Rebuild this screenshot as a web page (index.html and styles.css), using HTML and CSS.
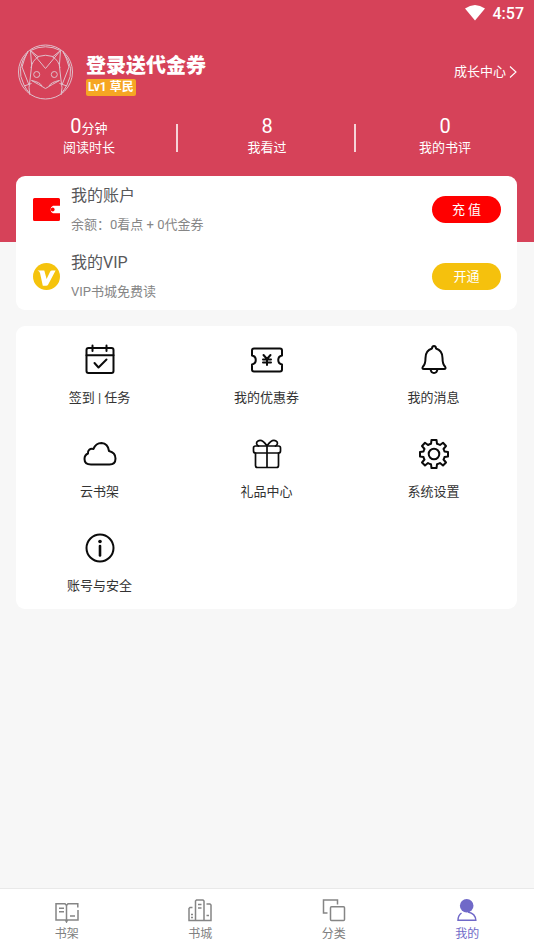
FILE: index.html
```html
<!DOCTYPE html>
<html lang="zh-CN">
<head>
<meta charset="utf-8">
<meta name="viewport" content="width=device-width, initial-scale=1">
<title>我的</title>
<link rel="stylesheet" href="styles.css">
</head>
<body>
<div class="app">
  <header class="hero">
    <div class="status">
      <svg width="20" height="16" viewBox="0 0 20 16" aria-hidden="true"><path fill="#fff" d="M0 3.600Q10-3.400 20 3.600L10 15.600Z"/></svg>
      <span class="clock">4:57</span>
    </div>
    <div class="profile">
      <svg class="avatar" width="56" height="56" viewBox="0 0 56 56" fill="none" stroke="#dfc0cb" stroke-width="1" aria-hidden="true">
        <circle cx="27.500" cy="28" r="27"/>
        <path d="M12.500 6.500Q27.500-1 42.500 6.500M10 8Q-3 24 6 41Q8 45 12 50M45 8Q58 24 49 41Q47 45 43 50"/>
        <path d="M12.500 6.500 27.500 24.500 42.500 6.500M12.500 6.500 20.500 13M42.500 6.500 34.500 13M20 12.500Q27.500 10 35 12.500M12.500 6.500Q15 22 12 36Q10 44 12 51M42.500 6.500Q40 22 43 36Q45 44 43 51M20 13Q14 17 13 24M35 13Q41 17 42 24M10 7Q6 15 4 23L11 41M45 7Q49 15 51 23L44 41"/>
        <path d="M13.500 36.500Q20 40 27.500 44.500Q35 40 41.500 36.500M13.500 36.500Q22 38 24 42M41.500 36.500Q33 38 31 42M6 42 13.500 39.500M49 42 41.500 39.500"/>
        <circle cx="18.700" cy="30.500" r="3"/>
        <circle cx="36.300" cy="30.500" r="3"/>
      </svg>
      <div class="who">
        <h1 class="name">登录送代金券</h1>
        <span class="level">Lv1 草民</span>
      </div>
      <a class="growth" href="#growth">成长中心
        <svg width="8" height="14" viewBox="0 0 8 14" fill="none" stroke="#fff" stroke-width="1.100" aria-hidden="true"><path d="M1 1.500 7 7 1 12.500"/></svg>
      </a>
    </div>
    <ul class="stats">
      <li class="stat"><span class="num">0<small class="unit">分钟</small></span><span>阅读时长</span></li>
      <li class="stat"><span class="num">8</span><span>我看过</span></li>
      <li class="stat"><span class="num">0</span><span>我的书评</span></li>
    </ul>
  </header>

  <main class="main">
    <section class="card">
      <div class="row">
        <svg class="row-icon" width="27" height="27" viewBox="0 0 27 27" aria-hidden="true">
          <path fill="red" d="M1.500 2H25.500Q27 2 27 3.500V9.800H20A4 4 0 0 0 20 17.200H27V23.500Q27 25 25.500 25H1.500Q0 25 0 23.500V3.500Q0 2 1.500 2Z"/>
          <circle cx="19.700" cy="13.500" r="1.900" fill="red"/>
        </svg>
        <div class="row-text"><h2 class="row-title">我的账户</h2><p class="row-sub">余额：0看点 + 0代金券</p></div>
        <button class="pill pill-red" type="button">充 值</button>
      </div>
      <div class="row">
        <svg class="row-icon" width="27" height="27" viewBox="0 0 27 27" aria-hidden="true">
          <circle cx="13.500" cy="13.500" r="13.500" fill="#f5c30d"/>
          <path fill="#fff" d="M4.500 7.500H11.300L13.600 16 17.200 8.600Q17.800 7.500 19 7.500H22.600L15.200 21.500Q14.500 22.800 13.200 22.800H9.800L7 10Q6.600 8.300 4.500 7.500Z"/>
        </svg>
        <div class="row-text"><h2 class="row-title">我的VIP</h2><p class="row-sub">VIP书城免费读</p></div>
        <button class="pill pill-gold" type="button">开通</button>
      </div>
    </section>

    <nav class="card grid" aria-label="功能">
      <a class="cell" href="#sign">
        <svg class="icon" viewBox="0 0 34 34" aria-hidden="true"><rect x="3.500" y="5" width="27" height="25" rx="2"/><path d="M3.500 12.200H30.500M9.500 2.500V8M23.500 2.500V8M11.500 20 15.500 24.500 23.500 16.500"/></svg>
        <span>签到 | 任务</span>
      </a>
      <a class="cell" href="#coupons">
        <svg class="icon" viewBox="0 0 34 34" aria-hidden="true"><path d="M4 5.500H30Q32 5.500 32 7.500V12.500C27 13.500 27 20.500 32 21.500V26.500Q32 28.500 30 28.500H4Q2 28.500 2 26.500V21.500C7 20.500 7 13.500 2 12.500V7.500Q2 5.500 4 5.500Z"/><path d="M13.500 12 17 16 20.500 12M17 16V22M13 16.500H21M13 19.500H21"/></svg>
        <span>我的优惠券</span>
      </a>
      <a class="cell" href="#messages">
        <svg class="icon" viewBox="0 0 34 34" aria-hidden="true"><path d="M15 5.500Q15 3 17 3T19 5.500Q25.500 7.500 25.500 15C25.500 20 26 21.500 28 23.500Q29.500 26 27 26H7Q4.500 26 6 23.500C8 21.500 8.500 20 8.500 15Q8.500 7.500 15 5.500ZM13.500 26Q14 30 17 30T20.500 26"/></svg>
        <span>我的消息</span>
      </a>
      <a class="cell" href="#cloud">
        <svg class="icon" viewBox="0 0 34 34" aria-hidden="true"><path d="M8 27.500C3.500 27.500 1.500 25 1.500 22Q1.500 18 5 16.500C4.500 13.500 7 11 10.500 12C12 8 15 6 18.500 6Q25 6.500 26 14Q32.500 15.500 32.500 21.500C32.500 25.500 30 27.500 26.500 27.500Z"/></svg>
        <span>云书架</span>
      </a>
      <a class="cell" href="#gifts">
        <svg class="icon icon-thin" viewBox="0 0 34 34" aria-hidden="true"><rect x="3.500" y="9" width="27" height="7" rx="2"/><path d="M5.500 16V28.500Q5.500 30.500 7.500 30.500H26.500Q28.500 30.500 28.500 28.500V16M17 9V30.500M17 9C14 4.500 10.500 2.500 8 4C5.500 5.500 6.500 8 8.500 9M17 9C20 4.500 23.500 2.500 26 4C28.500 5.500 27.500 8 25.500 9"/></svg>
        <span>礼品中心</span>
      </a>
      <a class="cell" href="#settings">
        <svg class="icon" viewBox="0 0 34 34" aria-hidden="true"><path d="M14.500 3H19.500L20 6.800Q22 7.400 23 8L26 5.800 29 9 26.500 12Q27.200 13.200 27.500 14.500L31 15V19.500L27.500 20Q27.200 21.500 26.500 22.500L29 25.500 26 28.500 23 26Q22 26.800 20 27.300L19.500 31H14.500L14 27.300Q12.500 27 11 26L8 28.500 5 25.500 7.500 22.500Q6.800 21.500 6.500 20L3 19.500V15L6.500 14.500Q6.800 13.200 7.500 12L5 9 8 5.800 11 8Q12.500 7.200 14 6.800Z"/><circle cx="17" cy="17" r="5.300"/></svg>
        <span>系统设置</span>
      </a>
      <a class="cell" href="#security">
        <svg class="icon" viewBox="0 0 34 34" aria-hidden="true"><circle cx="17" cy="17" r="13.500"/><path d="M17 15V24.500" stroke-width="2.600"/><circle cx="17" cy="10.500" r="1.800" fill="#0b0b0b" stroke="none"/></svg>
        <span>账号与安全</span>
      </a>
    </nav>
  </main>

  <nav class="tabs" aria-label="主导航">
    <a class="tab" href="#shelf">
      <svg class="tab-icon" viewBox="0 0 26 26" aria-hidden="true"><path d="M12.500 24V8.500L11 6.800H2V23H11.500L12.500 25 13.500 23H24V13M12.500 8.500 14 6.800H23.800V10.500M5 11.300H10M5 14.800H10M16 19H21"/></svg>
      <span>书架</span>
    </a>
    <a class="tab" href="#store">
      <svg class="tab-icon" viewBox="0 0 26 26" aria-hidden="true"><path d="M8.500 23.500V4L9.500 3H16L17 4V23.500M5.500 10.500H3L2 11.500V23.500H24V8L23 7H19.500M11 7.500H14.500M11 11H14.500M4 17.500H6M4 20.500H6M19.500 18.500H22"/></svg>
      <span>书城</span>
    </a>
    <a class="tab" href="#category">
      <svg class="tab-icon" viewBox="0 0 26 26" aria-hidden="true"><path d="M16.500 7.500V3H2.500V16H6.500"/><rect x="9.500" y="9.800" width="14" height="13.700" rx="1"/></svg>
      <span>分类</span>
    </a>
    <a class="tab active" href="#me" aria-current="page">
      <svg class="tab-icon" viewBox="0 0 26 26" aria-hidden="true"><circle cx="12.700" cy="8.700" r="6.800" fill="#7069c8" stroke="none"/><path d="M7.500 16Q4 18.500 4 23.300H21.800Q21.500 16.500 14 15"/></svg>
      <span>我的</span>
    </a>
  </nav>
</div>
</body>
</html>
```
FILE: styles.css
```css
* {
  box-sizing: border-box;
}

body {
  margin: 0;
  background: #f7f7f7;
  color: #333;
  font: 13px/20px Roboto, "Noto Sans CJK SC", sans-serif;
}

a {
  color: inherit;
  text-decoration: none;
}

h1, h2, p, ul {
  margin: 0;
  padding: 0;
}

svg {
  display: block;
  flex: none;
}

.app {
  display: flex;
  flex-direction: column;
  min-height: 100vh;
}

.hero {
  padding-bottom: 84px;
  background: #d64259;
  color: #fff;
}

.status {
  display: flex;
  align-items: center;
  justify-content: flex-end;
  gap: 8px;
  height: 28px;
  padding: 0 10px;
}

.status svg {
  margin-bottom: 2px;
}

.clock {
  font-size: 16px;
  font-weight: 500;
}

.profile {
  display: flex;
  align-items: center;
  height: 88px;
  padding: 0 17px 0 18px;
}

.who {
  display: flex;
  flex-direction: column;
  align-items: flex-start;
  flex: 1;
  margin-left: 12px;
  padding-top: 4px;
}

.name {
  font-size: 20px;
  font-weight: 900;
  line-height: 26px;
}

.level {
  padding: 0 2px;
  border-radius: 2px;
  background: #f6a623;
  font-size: 12px;
  font-weight: 700;
  line-height: 17px;
}

.growth {
  display: flex;
  align-items: center;
  gap: 3px;
}

.stats {
  display: grid;
  grid-template-columns: repeat(3, 1fr);
  list-style: none;
}

.stat {
  display: flex;
  flex-direction: column;
  align-items: center;
  height: 42px;
  background: linear-gradient(#f6d3d8, #f6d3d8) right 8px / 2px 28px no-repeat;
}

.stat:last-child {
  background: none;
}

.num {
  height: 22px;
  font-size: 20px;
  line-height: 20px;
}

.unit {
  font-size: 13px;
}

.main {
  display: grid;
  gap: 16px;
  flex: 1;
  align-content: start;
  margin-top: -66px;
  padding: 0 17px 16px 16px;
}

.card {
  border-radius: 9px;
  background: #fff;
}

.row {
  display: flex;
  align-items: center;
  height: 67px;
  padding: 0 16px 0 17px;
}

.row-text {
  flex: 1;
  margin-left: 11px;
}

.row-title {
  margin-bottom: 8px;
  color: #58585a;
  font-size: 16px;
  font-weight: 400;
  line-height: 22px;
}

.row-sub {
  color: #868686;
}

.pill {
  width: 69px;
  height: 27px;
  padding: 0;
  border: 0;
  border-radius: 14px;
  color: #fff;
  font: inherit;
}

.pill-red {
  background: #f00;
}

.pill-gold {
  background: #f5c10d;
}

.grid {
  display: grid;
  grid-template-columns: repeat(3, 1fr);
  padding-bottom: 1px;
}

.cell {
  display: flex;
  flex-direction: column;
  align-items: center;
  gap: 11px;
  height: 94px;
  padding-top: 17px;
}

.icon {
  width: 34px;
  height: 34px;
  fill: none;
  stroke: #0b0b0b;
  stroke-width: 2;
  stroke-linecap: round;
  stroke-linejoin: round;
}

.icon-thin {
  stroke-width: 1.7;
}

.tabs {
  display: grid;
  grid-template-columns: repeat(4, 1fr);
  height: 61px;
  border-top: 1px solid #e9e9e9;
  background: #fff;
  color: #808080;
  font-size: 12px;
}

.tab {
  display: flex;
  flex-direction: column;
  align-items: center;
  gap: 1px;
  padding-top: 8px;
}

.tab-icon {
  width: 26px;
  height: 26px;
  fill: none;
  stroke: #858585;
  stroke-width: 1.5;
}

.active {
  color: #7069c8;
}

.active .tab-icon {
  stroke: #7069c8;
}
```
